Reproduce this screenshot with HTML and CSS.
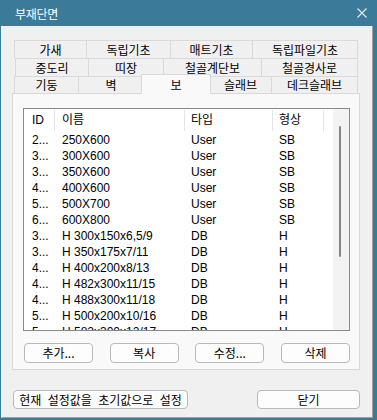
FILE: index.html
```html
<!DOCTYPE html>
<html lang="ko">
<head>
<meta charset="utf-8">
<title>부재단면</title>
<link rel="stylesheet" href="styles.css">
</head>
<body>
<div class="window">
    <div class="titlebar">
        <span class="title">부재단면</span>
        <svg class="close" width="10" height="10" viewBox="0 0 10 10">
            <path d="M0.5 0.5 L9.5 9.5 M9.5 0.5 L0.5 9.5" stroke="#e4ecf0" stroke-width="1.1" fill="none"/>
        </svg>
    </div>

    <div class="client">
        <!-- 탭 3줄 -->
        <div class="tabs">
            <div class="tabrow row1">
                <div class="tab">가새</div>
                <div class="tab">독립기초</div>
                <div class="tab">매트기초</div>
                <div class="tab">독립파일기초</div>
            </div>
            <div class="tabrow row2">
                <div class="tab">중도리</div>
                <div class="tab">띠장</div>
                <div class="tab">철골계단보</div>
                <div class="tab">철골경사로</div>
            </div>
            <div class="tabrow row3">
                <div class="tab">기둥</div>
                <div class="tab">벽</div>
                <div class="tab active">보</div>
                <div class="tab">슬래브</div>
                <div class="tab">데크슬래브</div>
            </div>
        </div>

        <div class="panel">
            <div class="listbox">
                <div class="list_main">
                    <div class="list_head">
                        <div class="hcell">ID</div>
                        <div class="hcell">이름</div>
                        <div class="hcell">타입</div>
                        <div class="hcell">형상</div>
                    </div>
                    <div class="list_body">
                        <div class="row"><span>2...</span><span>250X600</span><span>User</span><span>SB</span></div>
                        <div class="row"><span>3...</span><span>300X600</span><span>User</span><span>SB</span></div>
                        <div class="row"><span>3...</span><span>350X600</span><span>User</span><span>SB</span></div>
                        <div class="row"><span>4...</span><span>400X600</span><span>User</span><span>SB</span></div>
                        <div class="row"><span>5...</span><span>500X700</span><span>User</span><span>SB</span></div>
                        <div class="row"><span>6...</span><span>600X800</span><span>User</span><span>SB</span></div>
                        <div class="row"><span>3...</span><span>H 300x150x6,5/9</span><span>DB</span><span>H</span></div>
                        <div class="row"><span>3...</span><span>H 350x175x7/11</span><span>DB</span><span>H</span></div>
                        <div class="row"><span>4...</span><span>H 400x200x8/13</span><span>DB</span><span>H</span></div>
                        <div class="row"><span>4...</span><span>H 482x300x11/15</span><span>DB</span><span>H</span></div>
                        <div class="row"><span>4...</span><span>H 488x300x11/18</span><span>DB</span><span>H</span></div>
                        <div class="row"><span>5...</span><span>H 500x200x10/16</span><span>DB</span><span>H</span></div>
                        <div class="row"><span>5...</span><span>H 582x300x12/17</span><span>DB</span><span>H</span></div>
                    </div>
                </div>
                <div class="vscroll"><div class="thumb"></div></div>
            </div>

            <div class="panel_buttons">
                <div class="btn">추가...</div>
                <div class="btn">복사</div>
                <div class="btn">수정...</div>
                <div class="btn">삭제</div>
            </div>
        </div>

        <div class="footer">
            <div class="btn btn_reset">현재 설정값을 초기값으로 설정</div>
            <div class="btn btn_close">닫기</div>
        </div>
    </div>
</div>
</body>
</html>
```

FILE: styles.css
```css
body { margin: 0; background: #3b7a98; font: 12px "Noto Sans CJK KR", sans-serif; color: #000; }
.window { width: 377px; height: 420px; display: flex; flex-direction: column; }

.titlebar { height: 26px; display: flex; align-items: center; justify-content: space-between; padding: 0 10px 0 15px; color: #fff; }
.title { font-size: 12px; letter-spacing: -0.3px; }
.close { display: block; }

.client { flex: 1; margin: 0 4px 2px 1px; padding: 14px 12px 0 10px; background: #f0f0f0; border-left: 1px solid #fff; border-right: 1px solid #a0a0a0; border-bottom: 1px solid #a0a0a0; }

/* tabs */
.tabs { margin-left: 2px; width: 344px; }
.tabrow { display: grid; }
.row1 { height: 18px; grid-template-columns: 72px 84px 82px 106px; }
.row2 { height: 18px; margin-left: 1px; grid-template-columns: 73px 75px 98px 97px; }
.row3 { height: 17px; grid-template-columns: 64px 65px 66px 62px 87px; }
.tab { border-top: 1px solid #d9d9d9; border-left: 1px solid #d9d9d9; background: #f0f0f0; text-align: center; line-height: 16px; white-space: nowrap; }
.row1 .tab, .row2 .tab { line-height: 17px; }
.tab:last-child { border-right: 1px solid #d9d9d9; }
.tab.active { margin: -2px -2px -1px; border-right: 1px solid #d9d9d9; background: #f9f9f9; line-height: 19px; position: relative; z-index: 1; }

/* panel */
.panel { height: 277px; border: 1px solid #d9d9d9; background: #f9f9f9; padding: 14px 9px 6px 10px; box-sizing: border-box; }

.listbox { height: 223px; box-sizing: border-box; border: 1px solid #85898f; background: #fff; display: flex; font-family: "Liberation Sans", "Noto Sans CJK KR", sans-serif; }
.list_main { flex: 1; overflow: hidden; }
.list_head, .row { display: grid; grid-template-columns: 31px 130px 88px 51px; }
.list_head { height: 23px; }
.hcell { margin: 1px 0; border-right: 1px solid #e5e5e5; line-height: 21px; }
.row { height: 16px; line-height: 16px; white-space: nowrap; }
.hcell:nth-child(1), .row span:nth-child(1) { padding-left: 8px; }
.hcell:nth-child(2), .row span:nth-child(2) { padding-left: 7px; }
.hcell:nth-child(3), .row span:nth-child(3) { padding-left: 6px; }
.hcell:nth-child(4), .row span:nth-child(4) { padding-left: 6px; }

.vscroll { width: 16px; background: #f3f3f3; padding-top: 17px; box-sizing: border-box; }
.thumb { width: 2px; height: 131px; margin-left: 6px; background: #868686; border-radius: 1px; }

/* buttons */
.panel_buttons { margin-top: 12px; padding-left: 1px; display: flex; justify-content: space-between; }
.btn { height: 20px; box-sizing: border-box; border: 1px solid #b9b9b9; border-radius: 4px; background: #fdfdfd; text-align: center; line-height: 18px; white-space: nowrap; }
.panel_buttons .btn { width: 69px; }

.footer { margin-top: 20px; padding-left: 1px; display: flex; justify-content: space-between; }
.footer .btn { height: 19px; line-height: 17px; }
.btn_reset { width: 175px; word-spacing: 3px; }
.btn_close { width: 103px; }
```
